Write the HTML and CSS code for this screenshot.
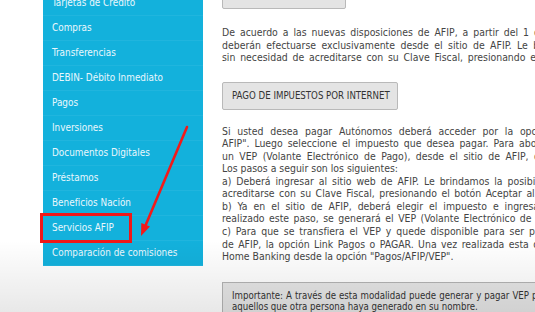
FILE: index.html
```html
<!DOCTYPE html>
<html lang="es">
<head>
<meta charset="utf-8">
<title>Servicios AFIP</title>
<link rel="stylesheet" href="styles.css">
</head>
<body>
<div class="page">
  <nav class="sidebar">
    <ul class="menu">
      <li>Tarjetas de Crédito</li>
      <li>Compras</li>
      <li>Transferencias</li>
      <li>DEBIN- Débito Inmediato</li>
      <li>Pagos</li>
      <li>Inversiones</li>
      <li>Documentos Digitales</li>
      <li>Préstamos</li>
      <li>Beneficios Nación</li>
      <li>Servicios AFIP</li>
      <li>Comparación de comisiones</li>
    </ul>
  </nav>
  <main class="content">
    <div class="btn btn-top"></div>
    <p class="para p1">
      <span class="ln w2">De acuerdo a las nuevas disposiciones de AFIP, a partir del 1 de</span>
      <span class="ln w25">deberán efectuarse exclusivamente desde el sitio de AFIP. Le brindamos</span>
      <span class="ln w18">sin necesidad de acreditarse con su Clave Fiscal, presionando el botón</span>
    </p>
    <div class="btn">PAGO DE IMPUESTOS POR INTERNET</div>
    <p class="para p2">
      <span class="ln w38">Si usted desea pagar Autónomos deberá acceder por la opción</span>
      <span class="ln w2">AFIP". Luego seleccione el impuesto que desea pagar. Para abonar</span>
      <span class="ln w25">un VEP (Volante Electrónico de Pago), desde el sitio de AFIP, que</span>
      <span class="ln">Los pasos a seguir son los siguientes:</span>
      <span class="ln w2">a) Deberá ingresar al sitio web de AFIP. Le brindamos la posibilidad</span>
      <span class="ln w15">acreditarse con su Clave Fiscal, presionando el botón Aceptar al pie</span>
      <span class="ln w3">b) Ya en el sitio de AFIP, deberá elegir el impuesto e ingresar</span>
      <span class="ln w15">realizado este paso, se generará el VEP (Volante Electrónico de Pago).</span>
      <span class="ln w2">c) Para que se transfiera el VEP y quede disponible para ser pagado</span>
      <span class="ln w15">de AFIP, la opción Link Pagos o PAGAR. Una vez realizada esta operación</span>
      <span class="ln">Home Banking desde la opción "Pagos/AFIP/VEP".</span>
    </p>
    <div class="notice">
      <span class="ln w03">Importante: A través de esta modalidad puede generar y pagar VEP propios</span>
      <span class="ln">aquellos que otra persona haya generado en su nombre.</span>
    </div>
  </main>
</div>
<div class="highlight"></div>
<svg class="arrow" width="535" height="312" viewBox="0 0 535 312">
  <line x1="187" y1="127" x2="145.5" y2="225.5" stroke="#f21a1a" stroke-width="2.6" stroke-linecap="round"/>
  <polygon points="141,236 150,226.5 141.3,223" fill="#f21a1a"/>
</svg>
<div class="shade"></div>
</body>
</html>
```

FILE: styles.css
```css
html, body {
  margin: 0;
  padding: 0;
}
body {
  width: 535px;
  height: 312px;
  overflow: hidden;
  background: #ffffff;
  font-family: "DejaVu Sans Condensed", "DejaVu Sans", sans-serif;
  font-stretch: condensed;
  position: relative;
}
.page {
  display: flex;
  align-items: flex-start;
}
.sidebar {
  flex: none;
  width: 160px;
  margin-left: 43px;
  margin-top: -9px;
  background: #13b1dc;
}
.menu {
  list-style: none;
  margin: 0;
  padding: 0;
}
.menu li {
  height: 24px;
  line-height: 24px;
  padding-left: 9px;
  font-size: 9.9px;
  color: #eaf7fc;
  border-bottom: 1px solid rgba(255, 255, 255, 0.06);
  white-space: nowrap;
}
.content {
  flex: none;
  width: 330px;
  padding-left: 19px;
  color: #444;
}
.btn {
  box-sizing: border-box;
  height: 28px;
  display: flex;
  align-items: center;
  padding: 0 9px;
  background: #e4e4e4;
  border: 1px solid #b9b9b9;
  border-radius: 2px;
  font-size: 9.6px;
  color: #333;
  width: 176px;
  white-space: nowrap;
}
.btn-top {
  margin-top: -19px;
  width: 124px;
}
.para {
  margin: 0;
  font-size: 10.4px;
  line-height: 12.55px;
}
.p1 {
  margin-top: 17px;
  margin-bottom: 18px;
}
.p2 {
  margin-top: 15px;
}
.ln {
  display: block;
  white-space: nowrap;
}
.w03 { word-spacing: 0.3px; }
.w15 { word-spacing: 1.5px; }
.w18 { word-spacing: 1.8px; }
.w2 { word-spacing: 2px; }
.w25 { word-spacing: 2.5px; }
.w3 { word-spacing: 3px; }
.w38 { word-spacing: 3.8px; }
.notice {
  box-sizing: border-box;
  margin-top: 19px;
  width: 340px;
  padding: 7px 9px;
  background: #e6e6e6;
  border: 1px solid #b4b4b4;
  font-size: 9.6px;
  line-height: 11px;
  color: #333;
}
.highlight {
  position: absolute;
  left: 40px;
  top: 213px;
  width: 92px;
  height: 30px;
  box-sizing: border-box;
  border: 3px solid #f01818;
}
.arrow {
  position: absolute;
  left: 0;
  top: 0;
  pointer-events: none;
}
.shade {
  position: absolute;
  left: 0;
  right: 0;
  top: 240px;
  bottom: 0;
  background: linear-gradient(to bottom, rgba(0, 0, 0, 0) 0%, rgba(0, 0, 0, 0.09) 100%);
  pointer-events: none;
}
```
